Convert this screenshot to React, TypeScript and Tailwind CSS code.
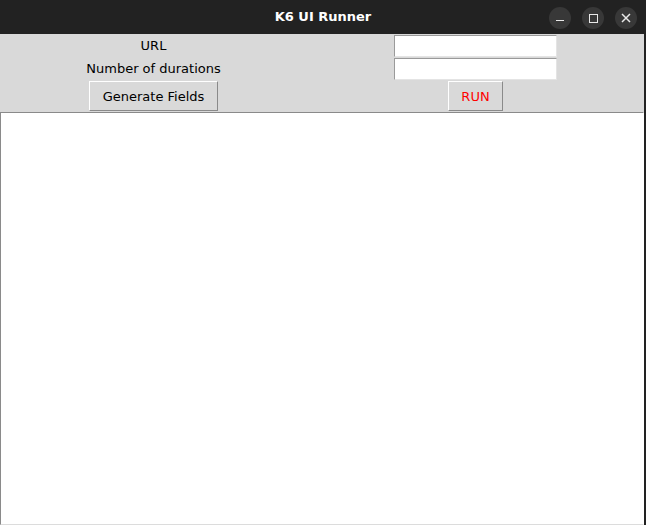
import React from 'react';

const font = { fontFamily: '"DejaVu Sans", sans-serif' };

// tk-like sunken entry
const Entry: React.FC = () => (
  <input
    className="w-[163px] h-[22px] bg-white border border-t-[#9a9a9a] border-l-[#9a9a9a] border-b-[#e4e4e4] border-r-[#e4e4e4] outline-none"
    type="text"
  />
);

const TkButton: React.FC<{ children: React.ReactNode; className?: string }> = ({ children, className = '' }) => (
  <button
    className={`h-[30px] bg-[#d9d9d9] border border-t-white border-l-white border-b-[#8a8a8a] border-r-[#8a8a8a] text-[13px] leading-none ${className}`}
  >
    {children}
  </button>
);

export default function App() {
  return (
    <div className="w-[646px] h-[525px] bg-[#222222] flex flex-col overflow-hidden" style={font}>
      {/* Title bar */}
      <div className="relative h-[34px] flex items-center justify-center shrink-0">
        <span className="text-white font-bold text-[13px]">K6 UI Runner</span>
        <div className="absolute right-[9px] top-[7px] flex gap-[11px]">
          <div className="w-[22px] h-[22px] rounded-full bg-[#383838] flex items-center justify-center">
            <div className="w-[8px] h-[1.5px] bg-[#e8e8e8] mt-[5px]" />
          </div>
          <div className="w-[22px] h-[22px] rounded-full bg-[#383838] flex items-center justify-center">
            <div className="w-[9px] h-[9px] border-[1.5px] border-[#e8e8e8]" />
          </div>
          <div className="w-[22px] h-[22px] rounded-full bg-[#383838] flex items-center justify-center">
            <svg width="10" height="10" viewBox="0 0 10 10">
              <path d="M1 1L9 9M9 1L1 9" stroke="#e8e8e8" strokeWidth="1.5" />
            </svg>
          </div>
        </div>
      </div>

      {/* Window body */}
      <div className="w-[644px] flex-1 bg-[#d9d9d9] flex flex-col text-[13px] text-black">
        <div className="grid grid-cols-[307px_1fr] h-[23px] items-center">
          <div className="text-center">URL</div>
          <div className="flex justify-center">
            <Entry />
          </div>
        </div>
        <div className="grid grid-cols-[307px_1fr] h-[23px] items-center">
          <div className="text-center">Number of durations</div>
          <div className="flex justify-center">
            <Entry />
          </div>
        </div>
        <div className="grid grid-cols-[307px_1fr] h-[32px] items-center">
          <div className="flex justify-center">
            <TkButton className="w-[129px]">Generate Fields</TkButton>
          </div>
          <div className="flex justify-center">
            <TkButton className="w-[55px] text-[#ff0000]">RUN</TkButton>
          </div>
        </div>
        <textarea className="flex-1 w-full bg-white resize-none outline-none border border-t-[#8a8a8a] border-l-[#8a8a8a] border-b-[#dcdcdc] border-r-white" />
      </div>
    </div>
  );
}
